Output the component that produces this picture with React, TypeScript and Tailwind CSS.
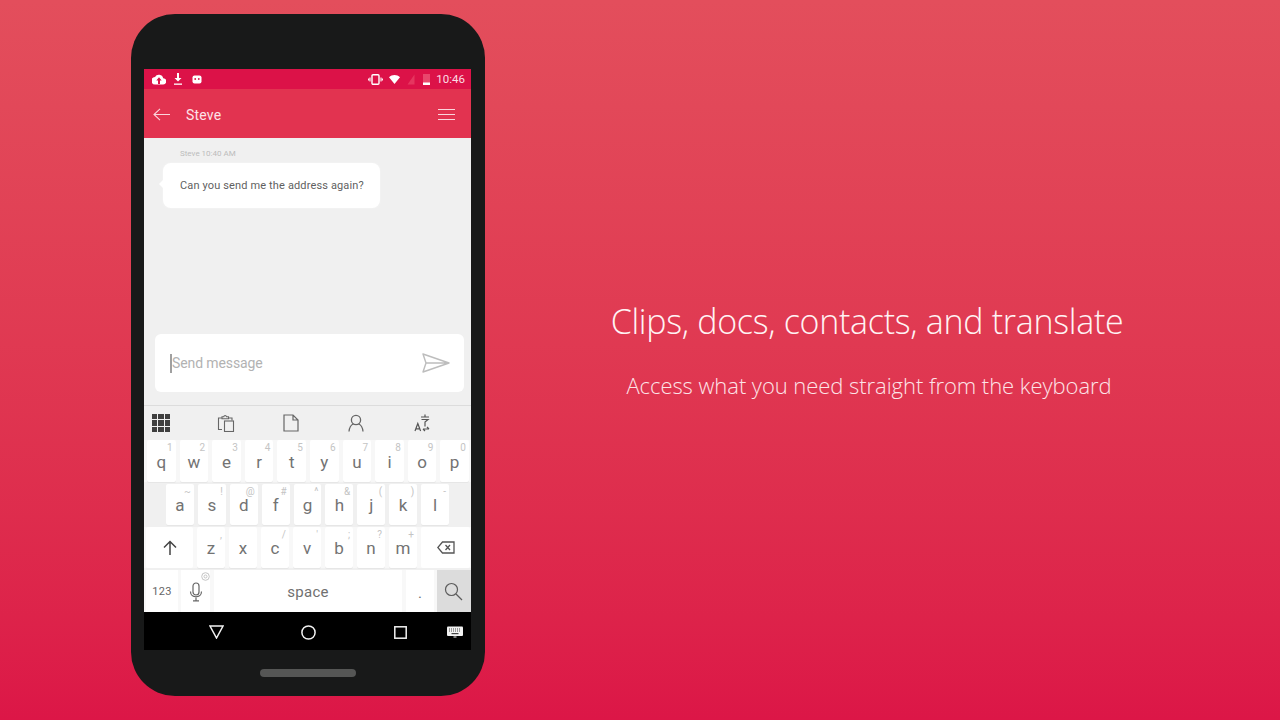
import React from "react";

const F = "font-['Roboto',sans-serif]";

function Key({ l, h, w = "flex-1", hc = "" }: { l: string; h?: string; w?: string; hc?: string }) {
  return (
    <div className={`relative ${w} h-full bg-white rounded-[2px] flex items-center justify-center text-[#737373] text-[17px] shadow-[0_1px_0_#e6e6e6]`}>
      <span className="mt-[1px] leading-[14px]">{l}</span>
      {h && <span className={`absolute right-[3px] top-[3px] text-[10px] leading-[10px] text-[#c4c4c4] ${hc}`}>{h}</span>}
    </div>
  );
}

const row1 = [["q","1"],["w","2"],["e","3"],["r","4"],["t","5"],["y","6"],["u","7"],["i","8"],["o","9"],["p","0"]];
const row2 = [["a","~"],["s","!"],["d","@"],["f","#"],["g","^"],["h","&"],["j","("],["k",")"],["l","-"]];
const row3 = [["z",","],["x",""],["c","/"],["v","'"],["b",";"],["n","?"],["m","+"]];

export default function App() {
  return (
    <div className={`w-[1280px] h-[720px] overflow-hidden flex bg-gradient-to-b from-[#e34e5c] to-[#dc1647] ${F}`}>
      {/* phone */}
      <div className="ml-[131px] mt-[14px] w-[354px] h-[682px] bg-[#181919] rounded-[44px] flex flex-col pt-[55px] px-[13px]">
        <div className="w-[327px] h-[581px] flex flex-col bg-[#f0f0f0] overflow-hidden">
          {/* status */}
          <div className="h-[20px] bg-[#dc1248] flex items-center pl-[8px] pr-[6px] text-white shrink-0">
            <svg width="14" height="11" viewBox="0 0 14 11" fill="#fff"><path d="M11.2 4.2A4.4 4.4 0 0 0 3 3 3.6 3.6 0 0 0 3.5 10.5H11A3.1 3.1 0 0 0 11.2 4.2Z" /><path d="M7 3.2 4.3 6.4H6V10H8V6.4H9.7Z" fill="#dc1248" /></svg>
            <svg className="ml-[7px]" width="10" height="13" viewBox="0 0 10 13" fill="#fff"><path d="M4 0H6V5H8.5L5 8.6 1.5 5H4Z" /><rect x="1" y="10.5" width="8" height="1.3" /></svg>
            <svg className="ml-[9px]" width="10" height="10" viewBox="0 0 10 10" fill="#fff"><rect x="0.5" y="1.5" width="9" height="8" rx="2" /><circle cx="3.2" cy="5" r="0.9" fill="#dc1248" /><circle cx="6.8" cy="5" r="0.9" fill="#dc1248" /></svg>
            <div className="flex-1" />
            <svg width="15" height="11" viewBox="0 0 15 11" fill="none" stroke="#fff"><rect x="4" y="0.7" width="7" height="9.6" rx="1" strokeWidth="1.4" /><path d="M2 3.5V7.5M13 3.5V7.5M0.6 4.5V6.5M14.4 4.5V6.5" strokeWidth="1.1" /></svg>
            <svg className="ml-[6px]" width="11" height="9" viewBox="0 0 11 9" fill="#fff"><path d="M0 2.2C3-.7 8-.7 11 2.2L5.5 9Z" /></svg>
            <svg className="ml-[7px]" width="8" height="11" viewBox="0 0 8 11" fill="#e5365f"><path d="M7.5.5V10.5H.5Z" /></svg>
            <svg className="ml-[8px]" width="7" height="12" viewBox="0 0 7 12"><rect x="0" y="1" width="7" height="11" fill="#e9466c" /><rect x="0" y="9.5" width="7" height="2.5" fill="#fff" /></svg>
            <span className="ml-[6px] mt-[1px] text-[11.5px] leading-none text-[#fbdde4]">10:46</span>
          </div>
          {/* app bar */}
          <div className="h-[49px] bg-[#e23350] flex items-center pl-[9px] pr-[16px] shrink-0">
            <svg className="mt-[1px]" width="17" height="13" viewBox="0 0 17 13" fill="none" stroke="#fbd5dc" strokeWidth="1.1"><path d="M17 6.5H1M7 .8 1 6.5 7 12.2" /></svg>
            <span className="ml-[16px] mt-[3px] text-[14px] text-[#fde3e8] tracking-[0.2px]">Steve</span>
            <div className="flex-1" />
            <div className="w-[17px] flex flex-col gap-[4px] mt-[1px]">
              <div className="h-[1px] bg-[#fbd5dc]" /><div className="h-[1px] bg-[#fbd5dc]" /><div className="h-[1px] bg-[#fbd5dc]" />
            </div>
          </div>
          {/* chat */}
          <div className="h-[268px] flex flex-col shrink-0 pl-[11px] pr-[7px] border-b border-[#dcdcdc]">
            <div className="ml-[25px] mt-[11px] text-[8px] leading-[9px] text-[#bcbcbc]">Steve 10:40 AM</div>
            <div className="relative mt-[5px] ml-[8px] w-[217px] h-[45px] bg-white rounded-[8px] flex items-center pl-[17px] pt-[2px] text-[#5f5f5f] text-[11px] tracking-[0.14px] shadow-[0_0_2px_#f6f6f6]">
              Can you send me the address again?
              <div className="absolute -left-[4px] top-[16px] w-0 h-0 border-y-[5px] border-y-transparent border-r-[5px] border-r-white" />
            </div>
            <div className="flex-1" />
            <div className="mb-[13px] h-[58px] bg-white rounded-[6px] flex items-center pl-[15px] pr-[14px]">
              <div className="w-[1.5px] h-[19px] bg-[#a0a0a0]" />
              <span className="ml-[0.5px] text-[14px] text-[#b2b2b2] tracking-[-0.1px]">Send message</span>
              <div className="flex-1" />
              <svg width="28" height="20" viewBox="0 0 28 20" fill="none" stroke="#bdbdbd" strokeWidth="1.4" strokeLinejoin="round"><path d="M1 1 27 10 1 19 4 10ZM4 10H27" /></svg>
            </div>
          </div>
          {/* toolbar */}
          <div className="h-[34px] flex items-center pl-[8px] shrink-0 bg-[#f0f0f0]">
            <div className="grid grid-cols-3 gap-[1px] w-[18px] h-[18px]">
              {Array.from({ length: 9 }).map((_, i) => (<div key={i} className="bg-[#3f3f3f]" />))}
            </div>
            <svg className="ml-[47px]" width="18" height="18" viewBox="0 0 18 18" fill="none" stroke="#666" strokeWidth="1.1"><path d="M5 15.5H1.5V4H5M12 4H15V6.5" /><path d="M5 4.8V2.8H6.8C7 1 9.2 1 9.5 2.8H11.5V4.8Z" /><rect x="7.5" y="7" width="9" height="10.5" /></svg>
            <svg className="ml-[48px]" width="16" height="18" viewBox="0 0 16 18" fill="none" stroke="#666" strokeWidth="1.2"><path d="M1 1H10L15 6V17H1ZM10 1V6H15" /></svg>
            <svg className="ml-[49px]" width="16" height="18" viewBox="0 0 16 18" fill="none" stroke="#666" strokeWidth="1.3"><circle cx="8" cy="6" r="4.6" /><path d="M1 17.5C1.5 12.5 4 10.5 5.5 10M15 17.5C14.5 12.5 12 10.5 10.5 10" /></svg>
            <svg className="ml-[50px]" width="16" height="18" viewBox="0 0 16 18" fill="none" stroke="#555" strokeWidth="1.2"><path d="M1 17 3.8 9.5 6.6 17M2 14.8H5.6" /><path d="M7 3H15M11 .5V2.5M7.5 5.5H14L11 8V12.5" /><path d="M9 15H15M15 15 13 13M9 15 11 17" /></svg>
          </div>
          {/* keyboard */}
          <div className="flex flex-col gap-[2px] shrink-0">
            <div className="h-[42px] flex gap-[4px] pl-[3px] pr-[2px] bg-[#f7f7f7]">
              {row1.map(([l, h]) => (<Key key={l} l={l} h={h} />))}
            </div>
            <div className="h-[41px] flex gap-[4px] pl-[22px] pr-[22px]">
              {row2.map(([l, h]) => (<Key key={l} l={l} h={h} />))}
            </div>
            <div className="h-[41px] flex gap-[4px] pl-[2px] pr-[1px] bg-[#f8f8f8]">
              <div className="w-[47px] h-full bg-white flex items-center justify-center rounded-[2px]">
                <svg width="14" height="15" viewBox="0 0 14 15" fill="none" stroke="#444" strokeWidth="1.5"><path d="M7 15V1.5M1 7.5 7 1.5 13 7.5" /></svg>
              </div>
              {row3.map(([l, h]) => (<Key key={l} l={l} h={h || undefined} w="w-[28px]" />))}
              <div className="flex-1 h-full bg-white flex items-center justify-center rounded-[2px]">
                <svg width="18" height="13" viewBox="0 0 18 13" fill="none" stroke="#555" strokeWidth="1.3"><path d="M5.5 1H17V12H5.5L.8 6.5Z" /><path d="M8.5 4 13 9M13 4 8.5 9" /></svg>
              </div>
            </div>
            <div className="h-[42px] flex pl-[2px] bg-[#f8f8f8]">
              <div className="w-[32px] h-full bg-white flex items-center justify-center text-[11px] text-[#666]"><span className="mt-[2px] tracking-[0.3px]">123</span></div>
              <div className="relative ml-[3px] w-[29px] h-full bg-white flex items-center justify-center">
                <svg className="mt-[2px]" width="14" height="20" viewBox="0 0 14 20" fill="none" stroke="#666" strokeWidth="1.2"><rect x="4" y="1" width="6" height="12" rx="3" /><path d="M1.5 9.5C1.5 16.5 12.5 16.5 12.5 9.5M7 15.5V18.5M4 18.8H10" /></svg>
                <svg className="absolute right-[0px] top-[2px]" width="9" height="9" viewBox="0 0 9 9" fill="none" stroke="#c4c4c4"><circle cx="4.5" cy="4.5" r="3.8" /><circle cx="4.5" cy="4.5" r="1.5" /></svg>
              </div>
              <div className="ml-[4px] w-[188px] h-full bg-white flex items-center justify-center text-[15px] text-[#707070] tracking-[0.3px]"><span className="mt-[2px]">space</span></div>
              <div className="ml-[4px] w-[28px] h-full bg-white flex items-center justify-center text-[15px] text-[#707070]"><span className="mt-[4px]">.</span></div>
              <div className="w-[34px] h-full ml-auto bg-[#dcdcdc] flex items-center justify-center">
                <svg className="mr-[2px]" width="19" height="19" viewBox="0 0 19 19" fill="none" stroke="#5c5c5c" strokeWidth="1.2"><circle cx="7.5" cy="7.5" r="6" /><path d="M12 12 18 18" /></svg>
              </div>
            </div>
          </div>
          {/* nav */}
          <div className="flex-1 bg-black flex items-center pl-[65px] pr-[8px] pt-[2px]">
            <svg width="15" height="14" viewBox="0 0 15 14" fill="none" stroke="#f2f2f2" strokeWidth="1.5"><path d="M1 1H14L7.5 13Z" /></svg>
            <svg className="ml-[77px]" width="15" height="15" viewBox="0 0 15 15" fill="none" stroke="#f2f2f2" strokeWidth="1.5"><circle cx="7.5" cy="7.5" r="6.6" /></svg>
            <svg className="ml-[78px]" width="13" height="13" viewBox="0 0 13 13" fill="none" stroke="#f2f2f2" strokeWidth="1.5"><rect x=".8" y=".8" width="11.4" height="11.4" /></svg>
            <svg className="ml-auto" width="16" height="12" viewBox="0 0 16 12"><rect y="0.5" width="16" height="9.5" rx="1" fill="#f2f2f2" /><path d="M2 3H14M2 5H14" stroke="#444" strokeWidth="1" strokeDasharray="1 1" /><rect x="4.5" y="7" width="7" height="1.2" fill="#444" /><path d="M6.5 11H9.5" stroke="#f2f2f2" /></svg>
          </div>
        </div>
        <div className="flex-1 flex items-center justify-center">
          <div className="w-[96px] h-[8px] rounded-full bg-[#555655]" />
        </div>
      </div>
      {/* text */}
      <div className="ml-[126px] mt-[298px] w-[512px] flex flex-col items-center text-white font-['Open_Sans',sans-serif] font-light whitespace-nowrap">
        <div className="text-[34px] leading-[46px] tracking-[-0.3px] text-[#fff3f4]">Clips, docs, contacts, and translate</div>
        <div className="mt-[26px] ml-[4px] text-[22px] leading-[30px] tracking-[-0.05px] text-[#fde4e8]">Access what you need straight from the keyboard</div>
      </div>
    </div>
  );
}
